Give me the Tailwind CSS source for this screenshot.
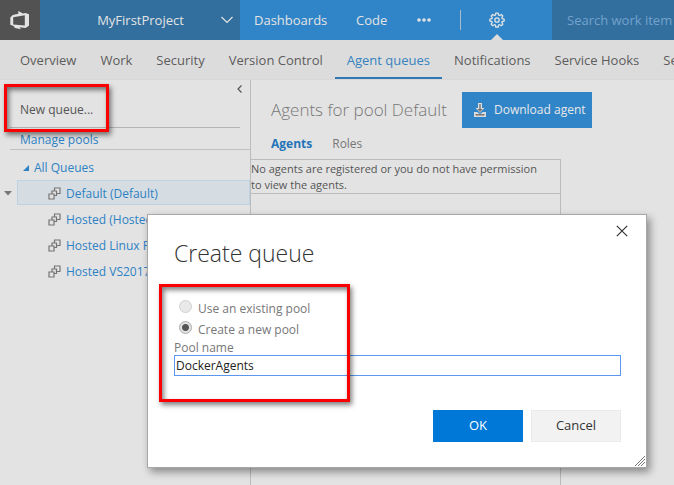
<!DOCTYPE html>
<html lang="en">
<head>
<meta charset="utf-8">
<title>Agent queues</title>
<script src="https://cdn.jsdelivr.net/npm/@tailwindcss/browser@4"></script>
</head>
<body class="relative flex h-screen flex-col overflow-hidden bg-[#e3e3e3] font-['Open_Sans','Noto_Sans',sans-serif] text-xs text-[#555]">
<header class="flex h-10 shrink-0 text-[13px] text-[#e3e3e3]">
  <a href="#" aria-label="Home" class="flex w-10 shrink-0 items-center justify-center bg-[#525252]">
    <svg class="size-5" viewBox="0 0 20 20" fill="#e3e3e3"><path fill-rule="evenodd" d="M8.300 1L13 3.600 15.500 3 19 4.200V15.800L15.500 18 9.500 17.300 11 19.300 5 18 3.500 16 .300 14.800V7.500L2.700 5 8.300 3.800zM3.200 7.300V14.500L14.800 15.400V5.300z"/></svg>
  </a>
  <button type="button" class="flex w-[200px] shrink-0 items-center bg-[#326f9f]">
    <span class="flex-1 pt-px pl-5">MyFirstProject</span>
    <svg class="mr-[7px] h-3 w-3" viewBox="0 0 12 12" fill="none" stroke="#e3e3e3" stroke-width="1.200"><path d="M.5 3L6 8.500 11.500 3"/></svg>
  </button>
  <nav class="flex w-[312px] shrink-0 items-center bg-[#3085c8] pl-[14px]">
    <a href="#" class="w-[102px] pt-px">Dashboards</a>
    <a href="#" class="w-[61px] pt-px">Code</a>
    <a href="#" aria-label="More" class="w-[43px]"><svg class="h-1 w-[14px]" viewBox="0 0 14 4" fill="#e3e3e3"><circle cx="2" cy="2" r="1.800"/><circle cx="7" cy="2" r="1.800"/><circle cx="12" cy="2" r="1.800"/></svg></a>
    <span class="h-5 w-px bg-[#a9bccb]"></span>
    <a href="#" aria-label="Settings" class="relative ml-[28px] flex h-full items-center">
      <svg class="size-4" viewBox="0 0 16 16" fill="none" stroke="#e3e3e3" stroke-width="1.300" stroke-linejoin="round"><path d="M6.800 1.200h2.400l.4 1.900 1 .4 1.700-1 1.500 1.500-1 1.700.4 1 1.900.4v2l-1.900.4-.4 1 1 1.700-1.500 1.500-1.700-1-1 .4-.4 1.900H6.800l-.4-1.900-1-.4-1.700 1-1.500-1.500 1-1.700-.4-1L.900 9.100v-2l1.900-.4.4-1-1-1.700 1.500-1.500 1.700 1 1-.4z"/><circle cx="8" cy="8" r="2.200"/></svg>
      <svg class="absolute bottom-0 left-[2px] h-[6px] w-3" viewBox="0 0 12 6" fill="#dcdcdc"><path d="M0 6L6 0l6 6z"/></svg>
    </a>
  </nav>
  <input type="text" aria-label="Search work items" placeholder="Search work item" class="min-w-0 flex-1 bg-[#326f9f] pt-[2px] pl-[15px] placeholder:text-[#73a2cb]">
</header>
<nav class="flex h-10 shrink-0 overflow-hidden border-b border-[#d8d8d8] bg-[#dcdcdc] pl-2 text-[13px] whitespace-nowrap text-[#5c5c5c]">
  <a href="#" class="flex items-center px-3 pt-[3px]">Overview</a>
  <a href="#" class="flex items-center px-3 pt-[3px]">Work</a>
  <a href="#" class="flex items-center px-3 pt-[3px]">Security</a>
  <a href="#" class="flex items-center px-3 pt-[3px]">Version Control</a>
  <a href="#" class="flex items-center border-b-2 border-[#2f78b4] px-3 pt-[5px] text-[#3583c0]">Agent queues</a>
  <a href="#" class="flex items-center px-3 pt-[3px]">Notifications</a>
  <a href="#" class="flex items-center px-3 pt-[3px]">Service Hooks</a>
  <a href="#" class="flex items-center px-3 pt-[3px]">Services</a>
</nav>
<div class="flex min-h-0 flex-1">
  <aside class="relative w-[251px] shrink-0 border-r border-[#bcbcbc] text-[#2d82c4]">
    <button type="button" aria-label="Collapse" class="absolute top-[5px] right-[7px]"><svg class="h-2 w-[6px]" viewBox="0 0 6 8" fill="none" stroke="#555" stroke-width="1.200"><path d="M4.500.5L1 4l3.500 3.500"/></svg></button>
    <div class="mr-[10px] ml-[10px] flex h-12 items-end border-b border-[#b4b4b4] px-[10px] pb-[9px]"><button type="button" class="text-[#555]">New queue...</button></div>
    <div class="ml-[10px] flex h-[22px] items-center border-b border-[#c0c0c0] px-[10px] pt-[2px]"><a href="#">Manage pools</a></div>
    <div class="flex h-[30px] items-center gap-[5px] pt-[6px] pl-[23px]">
      <svg class="size-[6px]" viewBox="0 0 6 6" fill="#2d82c4"><path d="M6 0v6H0z"/></svg><a href="#">All Queues</a>
    </div>
    <ul>
      <li class="relative ml-[17px] flex h-[25px] items-center gap-[5px] border border-[#bdd2e2] bg-[#d6dde2] pt-[2px] pl-[30px] mb-px">
        <svg class="absolute top-[10px] left-[-14px] h-[5px] w-2" viewBox="0 0 8 5" fill="#777"><path d="M0 0h8L4 4.500z"/></svg>
        <svg class="size-[13px]" viewBox="0 0 13 13" fill="#e3e3e3" stroke="#747474" stroke-width="1.200"><path d="M6.500 1h5.500v5.500H6.500z"/><path d="M4 4h4.500v4.500H4z"/><path d="M1 7h5v5H1z"/></svg><a href="#">Default (Default)</a></li>
      <li class="ml-[18px] flex h-[26px] items-center gap-[5px] pt-px pl-[30px]">
        <svg class="size-[13px]" viewBox="0 0 13 13" fill="#e3e3e3" stroke="#747474" stroke-width="1.200"><path d="M6.500 1h5.500v5.500H6.500z"/><path d="M4 4h4.500v4.500H4z"/><path d="M1 7h5v5H1z"/></svg><a href="#">Hosted (Hosted)</a></li>
      <li class="ml-[18px] flex h-[26px] items-center gap-[5px] pt-px pl-[30px]">
        <svg class="size-[13px]" viewBox="0 0 13 13" fill="#e3e3e3" stroke="#747474" stroke-width="1.200"><path d="M6.500 1h5.500v5.500H6.500z"/><path d="M4 4h4.500v4.500H4z"/><path d="M1 7h5v5H1z"/></svg><a href="#">Hosted Linux Preview</a></li>
      <li class="ml-[18px] flex h-[26px] items-center gap-[5px] pt-px pl-[30px]">
        <svg class="size-[13px]" viewBox="0 0 13 13" fill="#e3e3e3" stroke="#747474" stroke-width="1.200"><path d="M6.500 1h5.500v5.500H6.500z"/><path d="M4 4h4.500v4.500H4z"/><path d="M1 7h5v5H1z"/></svg><a href="#">Hosted VS2017</a></li>
    </ul>
  </aside>
  <main class="flex min-w-0 flex-1 flex-col">
    <div class="flex items-center gap-[15px] pt-3 pl-5">
      <h1 class="w-[176px] text-[17px] font-light whitespace-nowrap text-[#777]">Agents for pool Default</h1>
      <button type="button" class="flex h-9 w-[130px] items-center gap-2 bg-[#3085c8] pl-3 whitespace-nowrap text-[#e8e8e8]">
        <svg class="h-[14px] w-3" viewBox="0 0 12 14" fill="#ddd"><path d="M4 0h4v5h2.500L6 9.800 1.500 5H4z"/><path d="M0 9h3l3 2 3-2h3v5H0z"/><path d="M5.300 1h1.400v5h2L6 9 3.300 6h2zM1.500 11h9v1.500h-9z" fill="#777"/></svg>
        Download agent
      </button>
    </div>
    <div class="flex h-[31px] items-center gap-5 pl-5">
      <a href="#" class="font-bold text-[#2474b8]">Agents</a><a href="#" class="text-[#777]">Roles</a>
    </div>
    <div class="w-[310px] flex-1 border-t border-r border-[#bcbcbc]">
      <p class="border-b border-[#bcbcbc] pt-px pr-4 text-[11px] leading-4">No agents are registered or you do not have permission to view the agents.</p>
    </div>
  </main>
</div>

<div role="dialog" aria-labelledby="title" class="absolute top-[214px] left-[147px] flex h-[254px] w-[500px] flex-col border border-[#a8a8a8] bg-white pt-5 pr-[25px] pb-[25px] pl-[26px] shadow-[3px_4px_8px_rgba(0,0,0,0.4)]">
  <button type="button" aria-label="Close" class="absolute top-[10px] right-[18px]"><svg class="size-3" viewBox="0 0 12 12" stroke="#333" stroke-width="1.200"><path d="M.8.8l10.400 10.400M11.200.8L.8 11.200"/></svg></button>
  <h2 id="title" class="text-[23px] leading-9 font-light text-[#333]">Create queue</h2>
  <form class="flex flex-1 flex-col text-[#777]">
    <label class="mt-[27px] flex h-[21px] items-center gap-[6px] pl-[5px]"><input type="radio" name="pool" class="mb-1 size-[13px] appearance-none rounded-full border border-[#d0d0d0] bg-[#e9e9e9]">Use an existing pool</label>
    <label class="flex h-[21px] items-center gap-[6px] pl-[5px]"><input type="radio" name="pool" checked class="mb-1 size-[13px] appearance-none rounded-full border border-[#aaa] bg-[radial-gradient(circle,#555_3px,#e3e3e3_4px)]">Create a new pool</label>
    <label for="name" class="flex h-[15px] items-center">Pool name</label>
    <input id="name" type="text" value="DockerAgents" class="h-[21px] w-full border border-[#5b97ee] px-px text-[#222] outline-none">
    <div class="mt-auto flex justify-end gap-2 text-[13px]">
      <button type="submit" class="h-8 w-[90px] bg-[#0078d7] text-white">OK</button>
      <button type="button" class="h-8 w-[90px] border border-[#ebebeb] bg-[#f2f2f2] text-[#333]">Cancel</button>
    </div>
  </form>
  <svg class="absolute right-px bottom-px size-[10px]" viewBox="0 0 10 10" stroke="#777" stroke-width="1"><path d="M0 10L10 0M3 10l7-7M6 10l4-4"/></svg>
</div>
<div class="pointer-events-none absolute top-[84px] left-1 h-12 w-[105px] border-3 border-[#fb0000] shadow-[2px_3px_5px_rgba(0,0,0,0.5),inset_2px_3px_5px_rgba(0,0,0,0.5)]"></div>
<div class="pointer-events-none absolute top-[284px] left-[159px] h-[118px] w-[191px] border-3 border-[#fb0000] shadow-[2px_3px_5px_rgba(0,0,0,0.5),inset_2px_3px_5px_rgba(0,0,0,0.5)]"></div>
</body>
</html>
